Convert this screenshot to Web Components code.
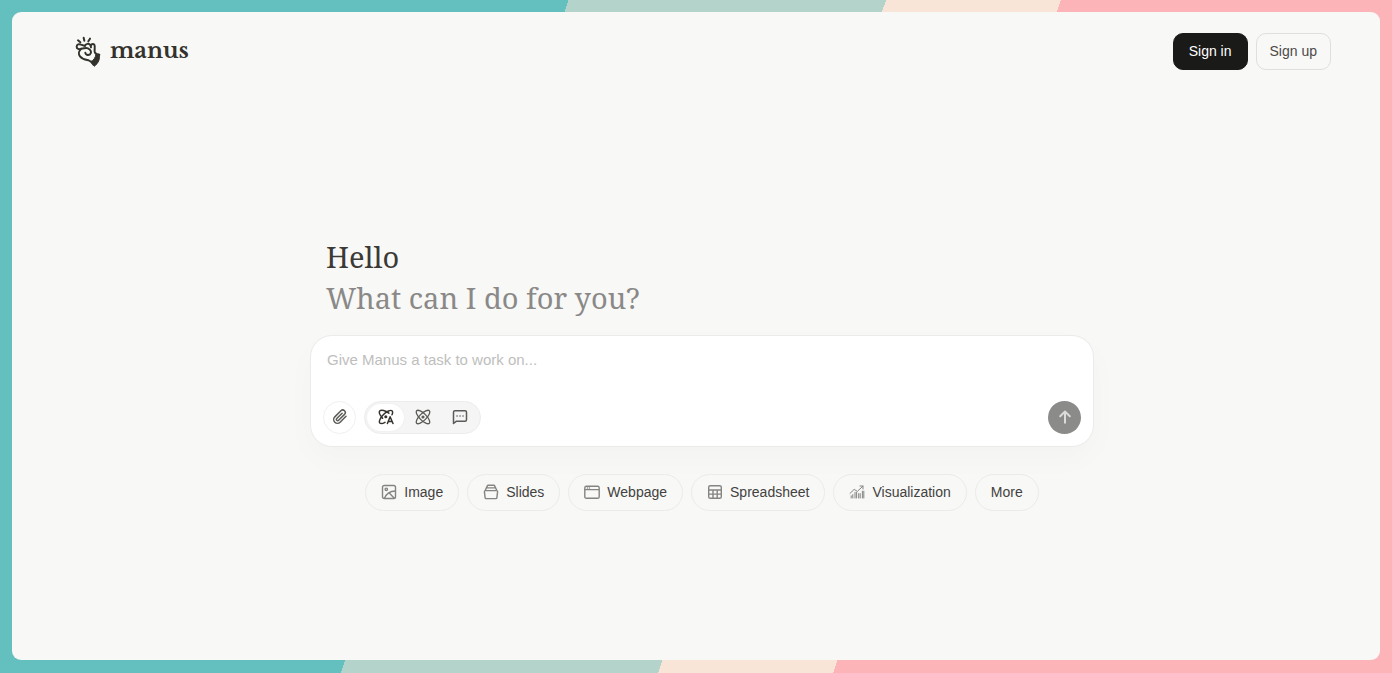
<!DOCTYPE html>
<html lang="en">
<head>
<meta charset="utf-8">
<meta name="viewport" content="width=device-width, initial-scale=1">
<title>Manus</title>
<style>
html, body { margin: 0; min-height: 100%; }
body { font-family: "Liberation Sans", Arial, sans-serif; color: #34322d; }
</style>
</head>
<body>
<manus-app></manus-app>

<template id="t-app">
<style>
:host { display: flex; box-sizing: border-box; min-height: 100vh; padding: 12px 12px 13px;
  background: linear-gradient(108.7deg, #64bfbf 35.1%, #b4d3cb 35.1% 54.7%, #f8e5d8 54.7% 65.5%, #fcb4b9 65.5%); }
.sheet { flex: 1; display: flex; flex-direction: column; background: #f8f8f7; border-radius: 9px; }
main { flex: 1; display: flex; flex-direction: column; justify-content: center; align-items: center; padding-left: 12px; }
.column { width: 100%; max-width: 784px; }
</style>
<div class="sheet">
  <manus-header></manus-header>
  <main><div class="column">
    <manus-greeting><span>Hello</span><span slot="question">What can I do for you?</span></manus-greeting>
    <manus-composer></manus-composer>
    <manus-suggestions></manus-suggestions>
  </div></main>
</div>
</template>

<template id="t-header">
<style>
:host { display: flex; justify-content: space-between; align-items: center; padding: 21px 49px 16px 63px; }
a { display: flex; align-items: center; gap: 8px; color: #34322d; text-decoration: none; }
svg { width: 27px; height: 32px; }
.word { font: bold 22px/28px "Libre Baskerville", "Liberation Serif", serif; padding-bottom: 2px; }
nav { display: flex; gap: 8px; }
</style>
<a href="#" aria-label="Manus home">
  <svg viewBox="10 10 81 96" fill="none" stroke="#34322d" stroke-width="6" stroke-linecap="round" stroke-linejoin="round">
    <path d="M19 23l7 6M36 15l2 9M55 18l-5 8"/>
    <path d="M29 48c-7 3-14 1-14-6 0-7 7-9 13-6l12 4c1-7 12-9 16-3l2 7c-3-8 5-13 10-8 3 5 0 13 1 21 2 7 7 9 14 9"/>
    <path d="M29 48c8 0 13-4 20-1 9 4 12 13 6 18-6 4-14 1-14-5M27 50c-6 6-7 15-2 21 8 10 16 10 26 12 6 2 10 6 14 12"/>
    <path d="M83 66c2 14-2 24-15 35L57 87c9-4 14-11 16-22z" fill="#34322d" stroke-width="3"/>
  </svg>
  <span class="word">manus</span>
</a>
<nav><pill-button variant="dark">Sign in</pill-button><pill-button variant="outline">Sign up</pill-button></nav>
</template>

<template id="t-pill">
<style>
:host { display: block; }
button { display: flex; align-items: center; gap: 7px; height: 37px; padding: 0 15px 1px; margin: 0; box-sizing: border-box;
  border: 1px solid #ebebea; border-radius: 19px; background: transparent; color: #43423e; font: 14px/20px "Liberation Sans", Arial, sans-serif; white-space: nowrap; cursor: pointer; }
:host([variant="dark"]) button { background: #1a1a19; border-color: #1a1a19; color: #fff; border-radius: 10px; }
:host([variant="outline"]) button { border-color: #dfdfde; border-radius: 10px; padding: 0 13px 1px; color: #4b4a47; }
</style>
<button type="button"><slot name="icon"></slot><slot></slot></button>
</template>

<template id="t-greeting">
<style>
:host { display: block; box-sizing: border-box; padding: 0 16px; margin-bottom: 17px; font: 29px/41px "Droid Serif", "Noto Serif", "Liberation Serif", serif; }
h1 { margin: 0; font: inherit; color: #3b3a36; }
p { margin: 0; color: #8a8987; }
</style>
<h1><slot></slot></h1>
<p><slot name="question"></slot></p>
</template>

<template id="t-composer">
<style>
:host { display: block; }
form { display: flex; flex-direction: column; justify-content: space-between; box-sizing: border-box; min-height: 112px; padding: 12px; background: #fff; border: 1px solid #ebebea; border-radius: 22px; box-shadow: 0 12px 32px rgba(0,0,0,.025); }
textarea { display: block; box-sizing: border-box; width: 100%; height: 44px; margin: 0; padding: 0 4px; border: 0; outline: 0; resize: none; background: none; color: #34322d; font: 15px/24px "Liberation Sans", Arial, sans-serif; }
textarea::placeholder { color: #bebebd; opacity: 1; }
.tools { display: flex; align-items: center; gap: 8px; }
button { display: grid; place-items: center; box-sizing: border-box; padding: 0; margin: 0; border: 0; background: none; color: #5b5b58; cursor: pointer; }
svg { width: 16px; height: 16px; fill: none; stroke: currentColor; stroke-width: 1.5; stroke-linecap: round; stroke-linejoin: round; }
.attach { width: 33px; height: 33px; border: 1px solid #f0f0ef; border-radius: 50%; }
.modes { display: flex; box-sizing: border-box; height: 33px; padding: 2px; border: 1px solid #ececeb; border-radius: 17px; background: #f5f5f5; }
.modes button { width: 37px; height: 27px; border-radius: 14px; }
.modes [aria-pressed="true"] { background: #fff; color: #34322d; box-shadow: 0 0 2px rgba(0,0,0,.06); }
.send { width: 33px; height: 33px; margin-left: auto; border-radius: 50%; background: #8b8b8a; color: #dcdcdb; }
.send svg { stroke-width: 2; }
</style>
<form>
  <textarea aria-label="Task" placeholder="Give Manus a task to work on..."></textarea>
  <div class="tools">
    <button class="attach" type="button" aria-label="Attach a file"><svg viewBox="0 0 16 16"><path d="M14 7.3l-5.9 5.9a3.7 3.7 0 0 1-5.3-5.3l6.1-6.1a2.5 2.5 0 0 1 3.6 3.6l-5.9 5.9a1.25 1.25 0 0 1-1.8-1.8l5.3-5.3"/></svg></button>
    <div class="modes" role="group" aria-label="Mode">
      <button type="button" aria-pressed="true" aria-label="Adaptive"><svg viewBox="0 0 16 16"><path d="M14 5.8c.8-1.800.8-3.200 0-4C12.700.6 8.800 2.200 5.500 5.500S.6 12.700 1.800 14c.9.9 3 .6 5.200-.7M10.800 4.200C7.500 1.500 3.200.5 1.900 1.800.7 3.100 2 6.300 4.600 9.200"/><circle cx="7.800" cy="7.800" r=".8" fill="currentColor"/><path d="M9.400 14.500l2.700-6.700 2.900 6.700M10.400 12.400h3.700"/></svg></button>
      <button type="button" aria-pressed="false" aria-label="Agent"><svg viewBox="0 0 16 16"><g stroke-width="1.3"><path d="M1.700 1.700C3 .4 7 2.100 10.400 5.600S15.600 13 14.300 14.300 9 13.900 5.600 10.400.4 3 1.700 1.700z"/><path d="M14.300 1.700C15.600 3 13.900 7 10.400 10.400S3 15.600 1.700 14.300 2.100 9 5.600 5.600 13 .4 14.300 1.700z"/></g><circle cx="8" cy="8" r=".8" fill="currentColor"/></svg></button>
      <button type="button" aria-pressed="false" aria-label="Chat"><svg viewBox="0 0 16 16"><path d="M1.500 14.500V3.200c0-.9.6-1.500 1.500-1.500h10c.9 0 1.500.6 1.500 1.500v7.600c0 .9-.6 1.500-1.500 1.500H4.200z"/><path d="M5 6.900h.1M8 6.900h.1M11 6.900h.1"/></svg></button>
    </div>
    <button class="send" type="submit" aria-label="Send"><svg viewBox="0 0 16 16"><path d="M8 13.700V2.700M3.200 7.200L8 2.500l4.800 4.700"/></svg></button>
  </div>
</form>
</template>

<template id="t-suggestions">
<style>
:host { display: flex; flex-wrap: wrap; justify-content: center; gap: 8px; margin-top: 27px; }
svg { width: 16px; height: 16px; fill: none; stroke: #858481; stroke-width: 1.4; stroke-linecap: round; stroke-linejoin: round; }
</style>
<pill-button><svg slot="icon" viewBox="0 0 16 16"><rect x="1.500" y="1.500" width="13" height="13" rx="1.800"/><circle cx="5.300" cy="5.300" r="1.200"/><path d="M3.500 14.300c1.800-4.400 5-7.200 10.800-7.300M8.500 9.300l4.800 4.900"/></svg>Image</pill-button>
<pill-button><svg slot="icon" viewBox="0 0 16 16"><path d="M4.800 1.300h6.400M3.600 3.900h8.800M2.300 6.600h11.400c.6 0 .9.4.9 1l-.7 6c-.1.7-.5 1-1.100 1H3.200c-.6 0-1-.3-1.100-1l-.7-6c0-.6.3-1 .9-1zM2.200 6.500l1.200-2.600 1.200-2.500M13.800 6.500l-1.200-2.600-1.200-2.500"/></svg>Slides</pill-button>
<pill-button><svg slot="icon" viewBox="0 0 16 16"><rect x=".8" y="2.300" width="14.400" height="12" rx="1.600"/><path d="M1 5.600h14M3.400 4h.1M5.400 4h.1"/></svg>Webpage</pill-button>
<pill-button><svg slot="icon" viewBox="0 0 16 16"><rect x="1.700" y="1.700" width="12.600" height="12.600" rx="1.600"/><path d="M1.800 6h12.400M1.800 10.100h12.400M6 6v8.200M10.200 6v8.200"/></svg>Spreadsheet</pill-button>
<pill-button><svg slot="icon" viewBox="0 0 16 16"><path d="M1 9.400l4.200-4 3.200 2L14 2M11 2h3v3M2.200 14v-2.200M3.800 14v-3.400M6 14V8.300M7.600 14V8.300M9.700 14V9.600M11.200 14V9.600M13.400 14V7.200M14.800 14V7.200" stroke-width="1"/></svg>Visualization</pill-button>
<pill-button>More</pill-button>
</template>

<script>
const define = (tag, id) => customElements.define(tag, class extends HTMLElement {
  constructor() {
    super();
    this.attachShadow({ mode: "open" }).append(document.getElementById(id).content.cloneNode(true));
  }
});
define("pill-button", "t-pill");
define("manus-header", "t-header");
define("manus-greeting", "t-greeting");
define("manus-composer", "t-composer");
define("manus-suggestions", "t-suggestions");
define("manus-app", "t-app");
</script>
</body>
</html>
